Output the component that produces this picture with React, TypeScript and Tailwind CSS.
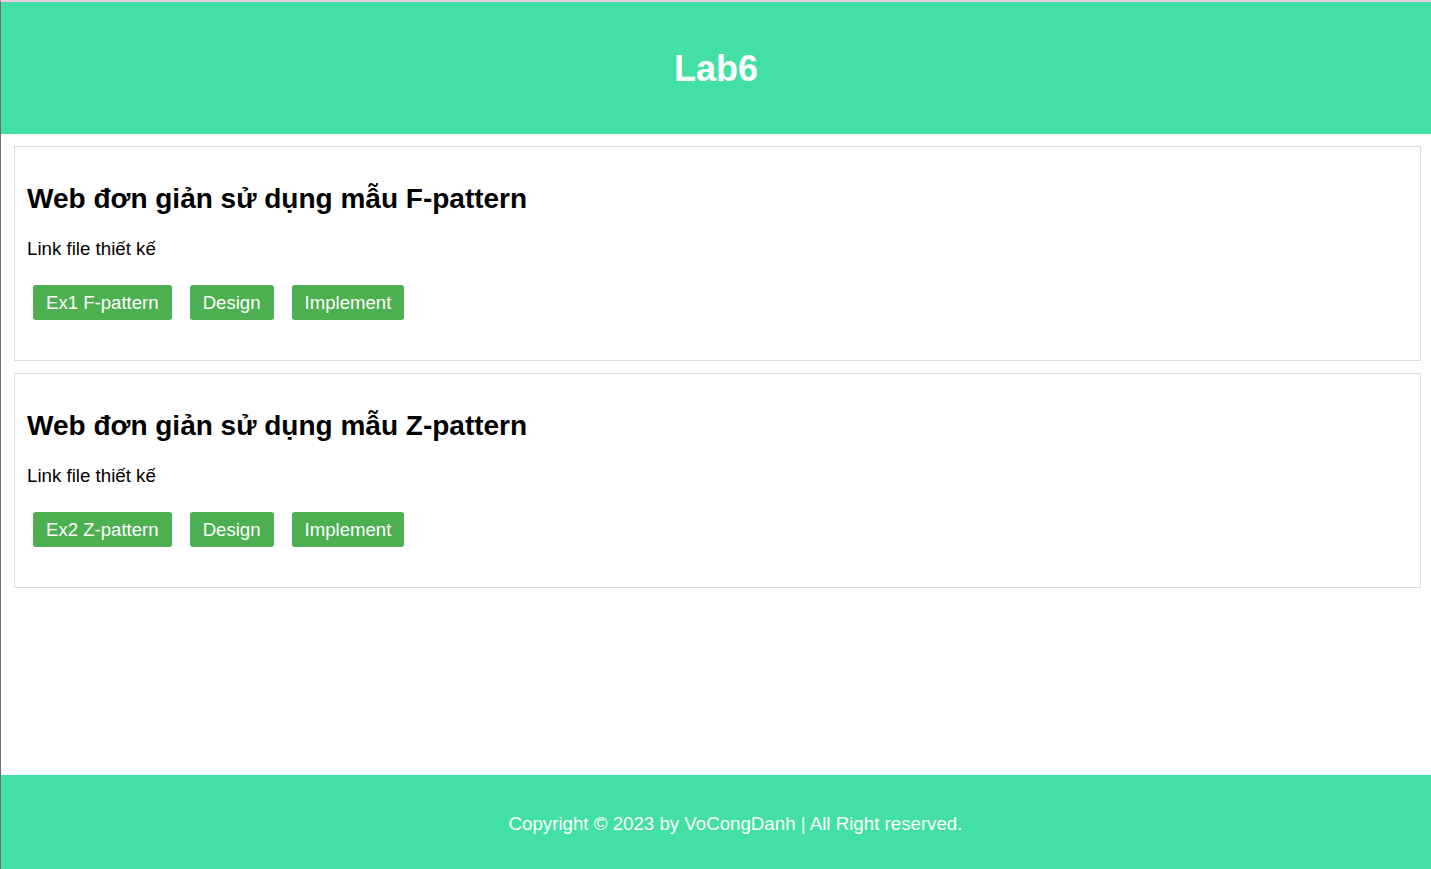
import React from 'react';

type Section = { title: string; ex: string };

const sections: Section[] = [
  { title: 'Web đơn giản sử dụng mẫu F-pattern', ex: 'Ex1 F-pattern' },
  { title: 'Web đơn giản sử dụng mẫu Z-pattern', ex: 'Ex2 Z-pattern' },
];

function LinkButton({ label }: { label: string }) {
  return (
    <a
      href="#"
      className="inline-block bg-[#4caf50] text-white text-[18.6px] leading-[21px] px-[13px] py-[7px] rounded-[3px]"
    >
      {label}
    </a>
  );
}

function Card({ section }: { section: Section }) {
  return (
    <div className="border border-[#dddddd] px-[12px] pt-[12px] pb-[40px]">
      <h2 className="mt-[24px] text-[28px] leading-[32px] font-bold text-black">{section.title}</h2>
      <p className="mt-[23px] text-[18.7px] leading-[21px] text-black">Link file thiết kế</p>
      <div className="mt-[26px] ml-[6px] flex gap-[18px]">
        <LinkButton label={section.ex} />
        <LinkButton label="Design" />
        <LinkButton label="Implement" />
      </div>
    </div>
  );
}

export default function App() {
  return (
    <div
      className="min-h-screen flex flex-col bg-white border-l border-[#6e6e6e] border-t-2 border-t-[#ecc9dd]"
      style={{ fontFamily: '"Liberation Sans", Arial, sans-serif' }}
    >
      {/* header */}
      <header className="h-[132px] bg-[#42e0a5] flex items-center justify-center">
        <h1 className="text-[36px] leading-[41px] font-bold text-white">Lab6</h1>
      </header>

      {/* content */}
      <main className="flex-1 flex flex-col gap-[12px] pt-[12px] pl-[13px] pr-[10px]">
        {sections.map(s => (
          <Card key={s.ex} section={s} />
        ))}
      </main>

      {/* footer */}
      <footer className="h-[94px] bg-[#42e0a5] flex items-center justify-center pl-[39px] pt-[3px]">
        <p className="text-[18.7px] leading-[21px] text-white">
          Copyright © 2023 by VoCongDanh | All Right reserved.
        </p>
      </footer>
    </div>
  );
}
